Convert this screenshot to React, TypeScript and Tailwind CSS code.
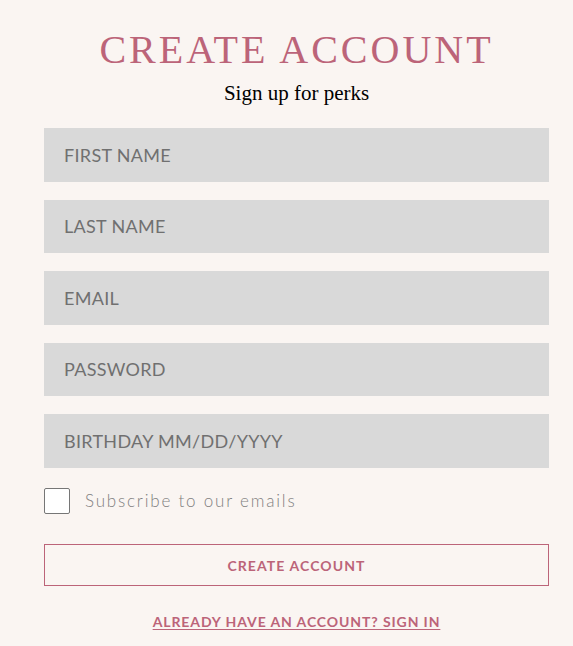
import React from "react";

const fields = ["FIRST NAME", "LAST NAME", "EMAIL", "PASSWORD", "BIRTHDAY MM/DD/YYYY"];

export default function App() {
  return (
    <div className="min-h-screen w-full bg-[#faf5f2] pl-[44px] pr-[24px] pt-[30px]">
      <h1
        className="text-center text-[40px] leading-[40px] tracking-[3px] text-[#bc6479] font-normal"
        style={{ fontFamily: '"Liberation Serif", "DejaVu Serif", serif' }}
      >
        CREATE ACCOUNT
      </h1>
      <p
        className="mt-[11px] text-center text-[21px] leading-[24px] text-black"
        style={{ fontFamily: '"Liberation Serif", serif' }}
      >
        Sign up for perks
      </p>
      <form className="mt-[23px] flex flex-col gap-[18px]" style={{ fontFamily: 'Lato, "Open Sans", sans-serif' }}>
        {fields.map((f) => (
          <input
            key={f}
            placeholder={f}
            className="h-[53.5px] w-full bg-[#d9d9d9] px-[20px] text-[18px] tracking-[0.3px] text-[#555] outline-none placeholder:text-[#707070]"
          />
        ))}
        <label className="mt-[2.5px] flex items-center gap-[15px]">
          <span className="h-[26px] w-[26px] rounded-[2px] border border-[#767676] bg-white" />
          <span className="text-[17px] font-light tracking-[1.8px] text-[#808080]">Subscribe to our emails</span>
        </label>
        <button
          type="button"
          className="mt-[12px] h-[42px] w-full border border-[#bc6479] text-[14px] font-bold tracking-[1.1px] text-[#bc6479]"
        >
          CREATE ACCOUNT
        </button>
        <div className="mt-[5px] text-center">
          <a className="text-[14px] font-bold leading-[20px] tracking-[0.9px] text-[#bc6479] underline underline-offset-[2px]">
            ALREADY HAVE AN ACCOUNT? SIGN IN
          </a>
        </div>
      </form>
    </div>
  );
}
